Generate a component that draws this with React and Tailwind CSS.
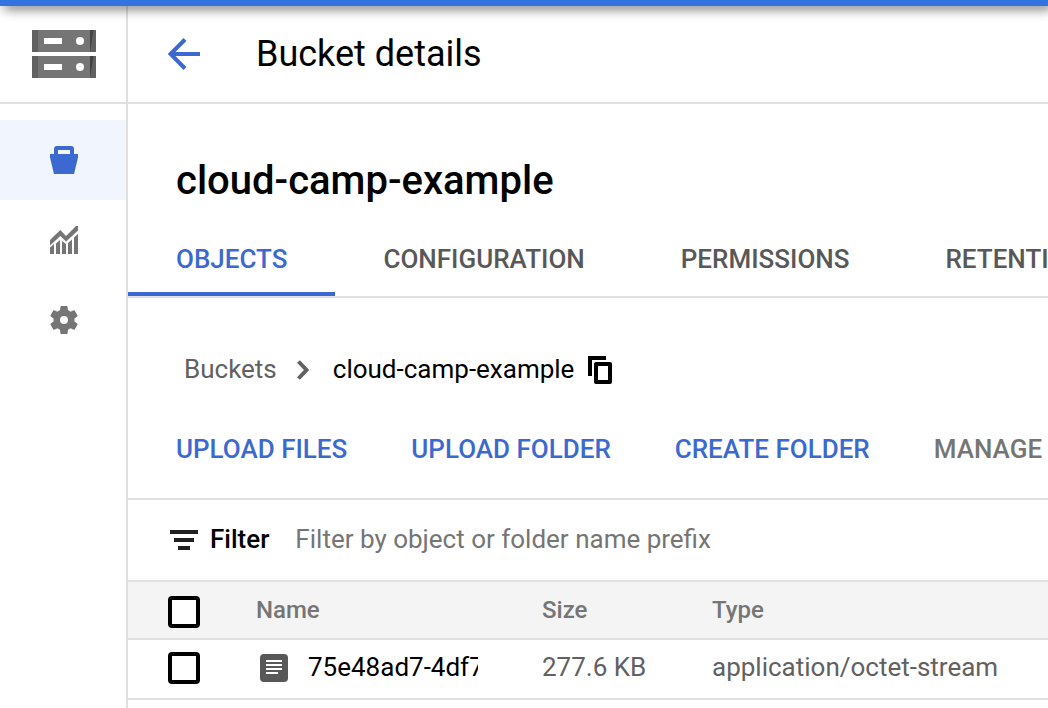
import React from "react";

function ServerIcon() {
  const unit = (
    <>
      <rect width="64" height="22" fill="#757575" />
      <rect width="6" height="22" fill="#616161" />
      <rect x="58" width="6" height="22" fill="#616161" />
      <path d="M58 0h3.5L58 22z" fill="#424242" />
      <rect x="12" y="8" width="18" height="6" fill="#fff" />
      <circle cx="48" cy="11" r="4" fill="#fff" />
    </>
  );
  return (
    <svg width="64" height="48" viewBox="0 0 64 48" aria-hidden="true">
      <g>{unit}</g>
      <g transform="translate(0 26)">{unit}</g>
    </svg>
  );
}

function BucketIcon() {
  return (
    <svg width="28" height="28" viewBox="0 0 28 28" fill="currentColor" aria-hidden="true">
      <path
        fillRule="evenodd"
        d="M7 0h14a3 3 0 0 1 3 3v5h4v3.500L24 28H4L0 11.500V8h4V3a3 3 0 0 1 3-3zm1 4v4h12V4z"
      />
    </svg>
  );
}

function ChartIcon() {
  return (
    <svg width="28" height="28" viewBox="0 0 28 28" fill="currentColor" aria-hidden="true">
      <path d="M0 14 10.300 4 16 10 26 0h2v4.500L16 15.500 10.300 10 0 19.500z" />
      <path d="M0 21.500 4 18v10H0zM6 17.500 10 14v14H6zM12 15l4 3v10h-4zM18 17l4-3.500V28h-4zM24 11.500 28 8v20h-4z" />
    </svg>
  );
}

function GearIcon() {
  return (
    <svg width="28" height="28" viewBox="2 2 20 20" fill="currentColor" aria-hidden="true">
      <path
        fillRule="evenodd"
        d="M19.430 12.980c.04-.32.07-.64.07-.98s-.03-.66-.07-.98l2.110-1.650c.19-.15.24-.42.12-.64l-2-3.460c-.12-.22-.39-.3-.61-.22l-2.490 1c-.52-.4-1.080-.73-1.690-.98l-.38-2.650C14.460 2.180 14.250 2 14 2h-4c-.25 0-.46.18-.49.42l-.38 2.650c-.61.25-1.170.59-1.690.98l-2.490-1c-.23-.09-.49 0-.61.22l-2 3.460c-.13.22-.07.49.12.64l2.110 1.650c-.04.32-.07.65-.07.98s.03.66.07.98l-2.110 1.650c-.19.15-.24.42-.12.64l2 3.460c.12.22.39.3.61.22l2.490-1c.52.4 1.080.73 1.690.98l.38 2.650c.03.24.24.42.49.42h4c.25 0 .46-.18.49-.42l.38-2.650c.61-.25 1.170-.59 1.690-.98l2.490 1c.23.09.49 0 .61-.22l2-3.460c.12-.22.07-.49-.12-.64zM12 14.850a2.850 2.850 0 1 1 0-5.700 2.850 2.850 0 0 1 0 5.700z"
      />
    </svg>
  );
}

function BackIcon() {
  return (
    <svg width="32" height="32" viewBox="0 0 32 32" fill="none" stroke="currentColor" strokeWidth="4" aria-hidden="true">
      <path d="M32 16H3" />
      <path d="M17 1.500 2.500 16 17 30.500" />
    </svg>
  );
}

function ChevronIcon() {
  return (
    <svg width="12" height="20" viewBox="0 0 12 20" fill="none" stroke="currentColor" strokeWidth="4" aria-hidden="true">
      <path d="M1.500 1.500 9.500 10l-8 8.500" />
    </svg>
  );
}

function CopyIcon() {
  return (
    <svg width="24" height="28" viewBox="0 0 24 28" fill="none" stroke="currentColor" strokeWidth="4" aria-hidden="true">
      <path d="M18 2H2v18" />
      <rect x="8" y="8" width="14" height="18" strokeLinejoin="round" />
    </svg>
  );
}

function FilterIcon() {
  return (
    <svg width="28" height="20" viewBox="0 0 28 20" fill="#212121" aria-hidden="true">
      <path d="M0 0h28v4H0zM4 8h20v4H4zM8 16h12v4H8z" />
    </svg>
  );
}

function FileIcon() {
  return (
    <svg className="shrink-0" width="28" height="28" viewBox="0 0 28 28" aria-hidden="true">
      <rect width="28" height="28" rx="4" fill="#585858" />
      <path d="M6 6h16v2H6zM6 10h16v2H6zM6 14h16v2H6zM6 18h12v2H6z" fill="#fff" />
    </svg>
  );
}

function Checkbox({ label }) {
  return (
    <input
      type="checkbox"
      aria-label={label}
      className="block size-8 appearance-none rounded-sm border-4 border-black bg-white checked:bg-[#3b69cf]"
    />
  );
}

const NAV = [
  { label: "Buckets", Icon: BucketIcon, active: true },
  { label: "Monitoring", Icon: ChartIcon },
  { label: "Settings", Icon: GearIcon },
];
const TABS = ["OBJECTS", "CONFIGURATION", "PERMISSIONS", "RETENTION"];
const ACTIONS = ["UPLOAD FILES", "UPLOAD FOLDER", "CREATE FOLDER"];

export default function App() {
  return (
    <div className="flex min-h-screen flex-col overflow-hidden bg-white font-['Roboto',sans-serif] text-[26px] leading-8 text-black">
      <div className="relative z-10 h-1.5 shrink-0 bg-[#3174df] shadow-[4px_2px_12px_rgba(0,0,0,0.8)]" />
      <div className="flex min-w-0 grow">
        <aside className="w-32 shrink-0 border-r-2 border-[#e0e0e0]">
          <div className="flex h-[98px] items-center border-b-2 border-[#e0e0e0] pl-8">
            <ServerIcon />
          </div>
          <nav className="mt-4 flex flex-col">
            {NAV.map(({ label, Icon, active }) => (
              <a
                key={label}
                href="#"
                aria-label={label}
                className={
                  active
                    ? "flex h-20 items-center bg-[#f0f5fe] pl-[50px] text-[#3b69cf]"
                    : "flex h-20 items-center pl-[50px] text-[#757575]"
                }
              >
                <Icon />
              </a>
            ))}
          </nav>
        </aside>

        <main className="min-w-0 flex-1 overflow-hidden">
          <header className="flex h-[98px] items-center gap-14 border-b-2 border-[#e0e0e0] px-10">
            <button type="button" aria-label="Back" className="text-[#3b69cf]">
              <BackIcon />
            </button>
            <h1 className="text-4xl">Bucket details</h1>
          </header>

          <h2 className="px-12 pt-13 text-[40px] leading-[50px] font-medium">cloud-camp-example</h2>

          <div role="tablist" className="mt-3.5 flex border-b-2 border-[#e0e0e0] font-medium">
            {TABS.map((tab, i) => (
              <button
                key={tab}
                type="button"
                role="tab"
                aria-selected={i === 0}
                className={
                  i === 0
                    ? "h-19 shrink-0 border-b-4 border-[#3b69cf] px-12 pt-1.5 text-[#3b69cf]"
                    : "h-19 shrink-0 border-b-4 border-transparent px-12 pt-1.5 text-[#585858]"
                }
              >
                {tab}
              </button>
            ))}
          </div>

          <nav aria-label="Breadcrumb" className="flex items-center px-14 pt-[55px]">
            <a href="#" className="text-[#616161]">Buckets</a>
            <span className="mr-6 ml-5 pt-0.5 text-[#616161]">
              <ChevronIcon />
            </span>
            <span>cloud-camp-example</span>
            <button type="button" aria-label="Copy name" className="ml-3.5 pt-0.5">
              <CopyIcon />
            </button>
          </nav>

          <div className="flex gap-16 border-b-2 border-[#e0e0e0] px-12 pt-12 pb-[33px] font-medium whitespace-nowrap">
            {ACTIONS.map((action) => (
              <button key={action} type="button" className="shrink-0 text-[#3b69cf]">
                {action}
              </button>
            ))}
            <button type="button" disabled className="shrink-0 text-[#757575]">
              MANAGE
            </button>
          </div>

          <div className="flex h-20 items-center px-[42px]">
            <FilterIcon />
            <label htmlFor="filter" className="ml-3 pb-0.5 font-medium">Filter</label>
            <input
              id="filter"
              type="text"
              placeholder="Filter by object or folder name prefix"
              className="ml-6.5 min-w-0 flex-1 bg-transparent pb-0.5 outline-none placeholder:text-[#757575]"
            />
          </div>

          <table className="w-full table-fixed border-collapse text-left whitespace-nowrap">
            <thead>
              <tr className="h-[58px] border-y-2 border-[#e0e0e0] bg-[#f4f4f4] text-2xl leading-8 text-[#757575]">
                <th className="w-32 pt-1 pl-10">
                  <Checkbox label="Select all objects" />
                </th>
                <th className="w-[286px] font-medium">Name</th>
                <th className="w-[170px] font-medium">Size</th>
                <th className="font-medium">Type</th>
              </tr>
            </thead>
            <tbody>
              <tr className="h-[60px] border-b-2 border-[#e0e0e0] text-[#616161]">
                <td className="pb-0.5 pl-10">
                  <Checkbox label="Select 75e48ad7-4df7" />
                </td>
                <td className="pr-16 pb-0.5 pl-1">
                  <div className="flex items-center gap-5 overflow-hidden text-black">
                    <FileIcon />
                    <span className="pb-0.5">75e48ad7-4df7</span>
                  </div>
                </td>
                <td className="pb-1">277.6 KB</td>
                <td className="pb-1">application/octet-stream</td>
              </tr>
            </tbody>
          </table>
        </main>
      </div>
    </div>
  );
}
